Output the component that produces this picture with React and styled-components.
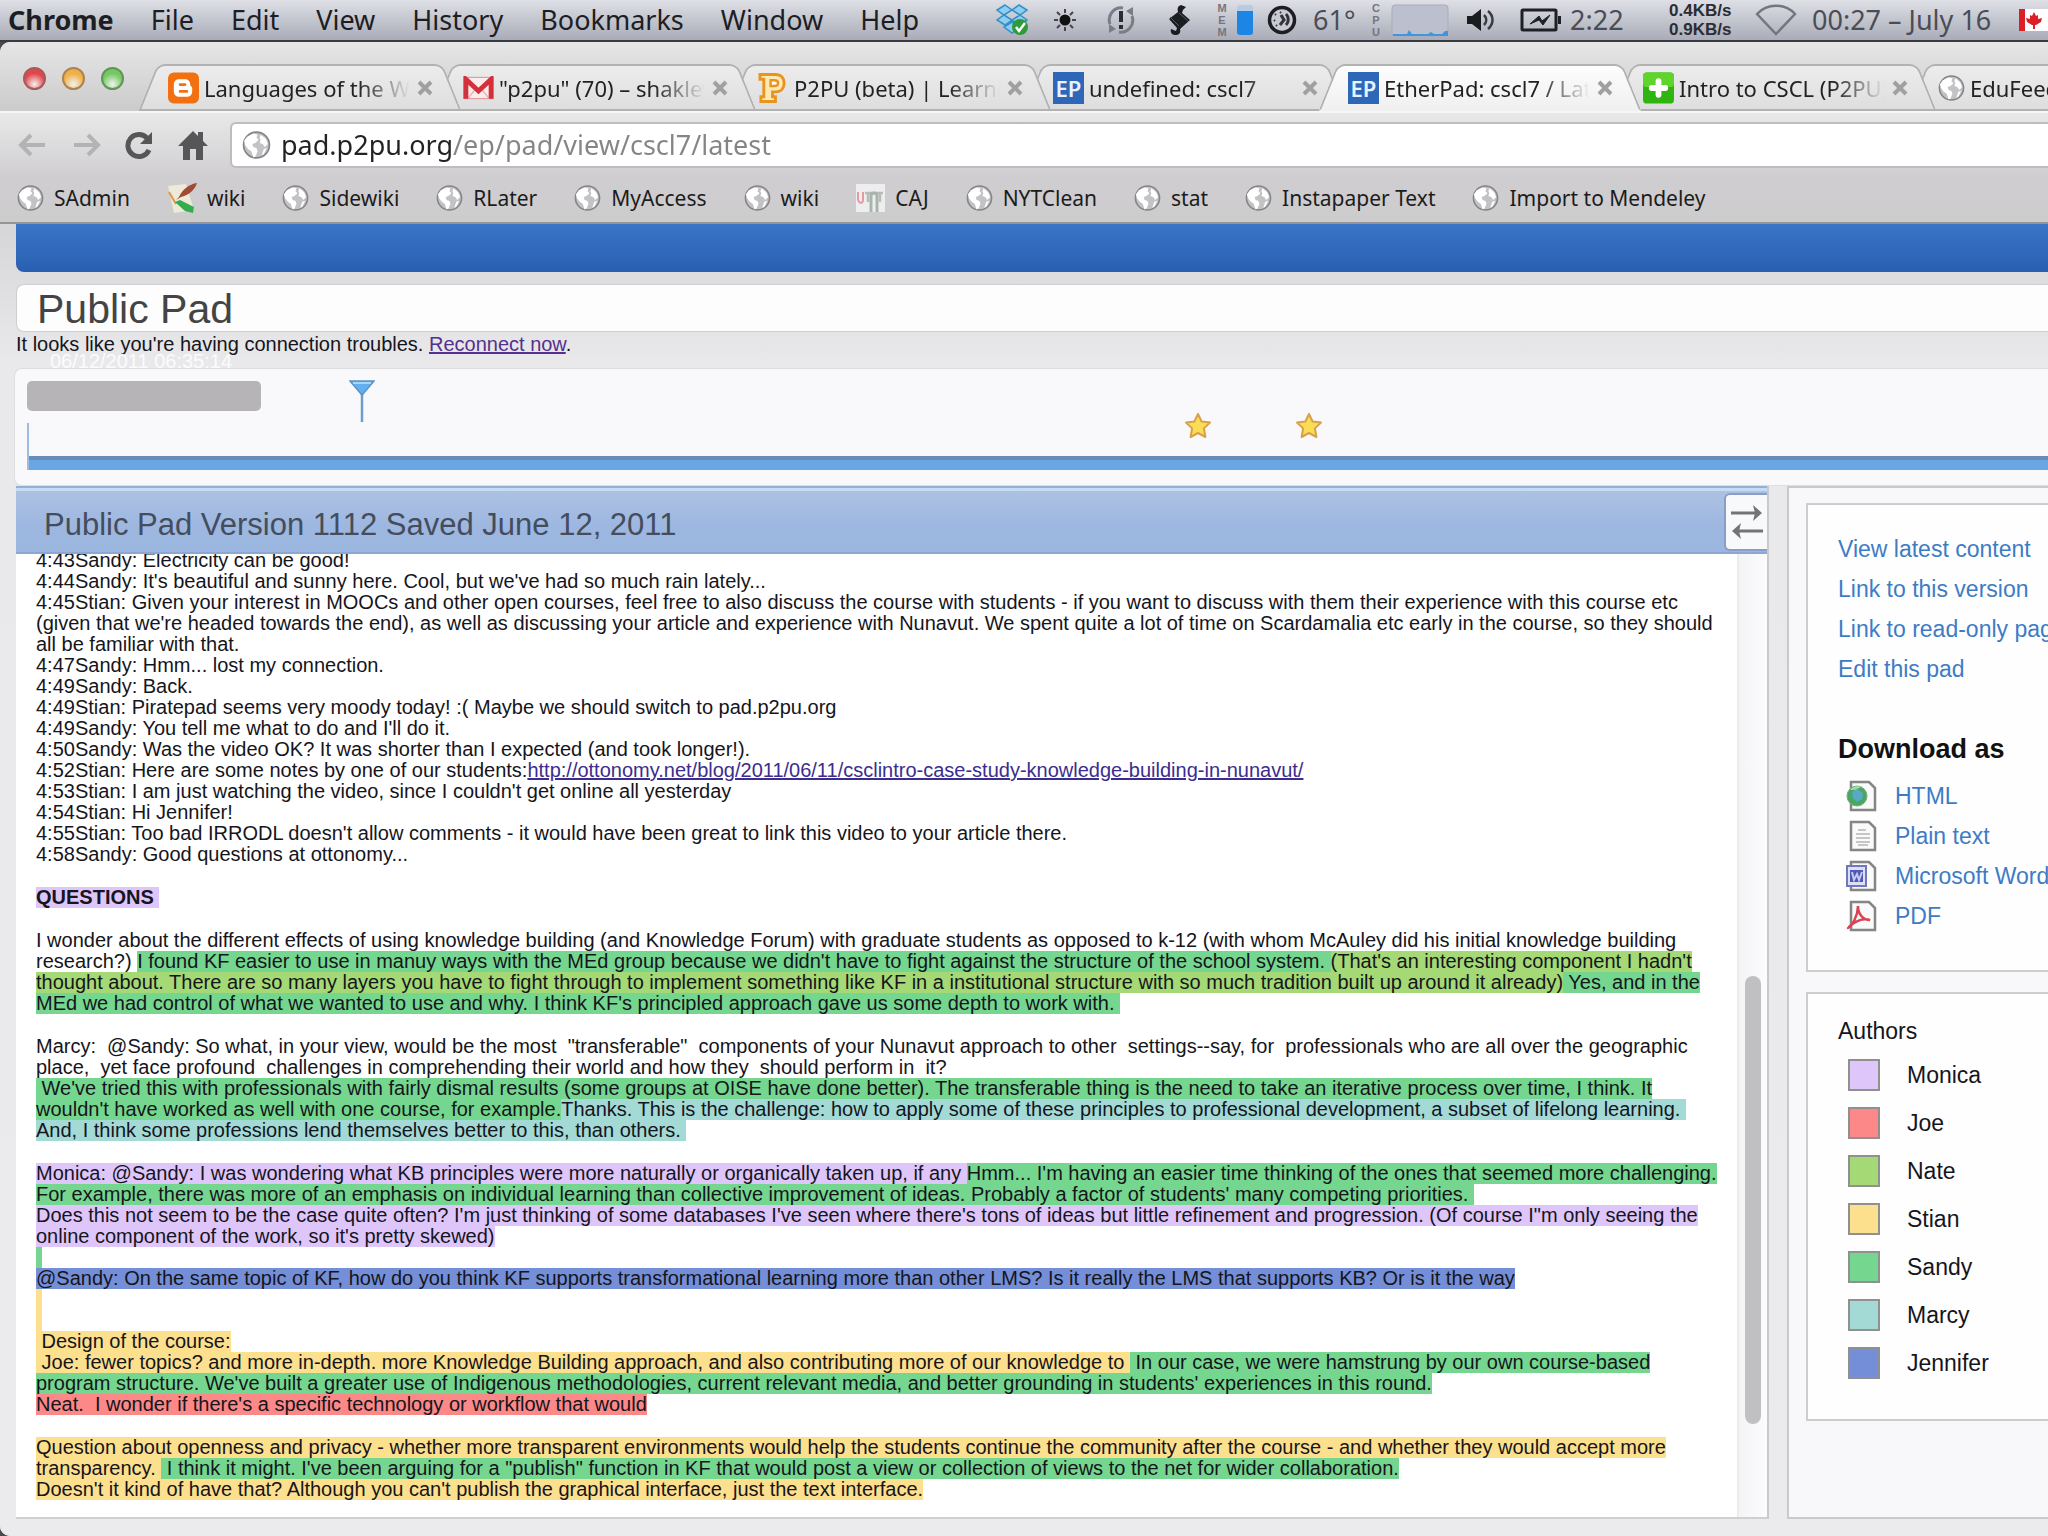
import { useState } from "react";
import styled, { createGlobalStyle, css } from "styled-components";

const UI_FONT = `"Noto Sans", "Open Sans", sans-serif`;
const PAGE_FONT = `"Liberation Sans", Arial, sans-serif`;

const AUTHOR_COLORS = {
  monica: "#dfc6fa",
  joe: "#fc8888",
  nate: "#a4d976",
  stian: "#fde08d",
  sandy: "#75d78f",
  marcy: "#a4dad6",
  jennifer: "#748fd7",
};

const GlobalStyle = createGlobalStyle`
  * {
    box-sizing: border-box;
  }

  body {
    margin: 0;
    background: #4a4a4e;
    overflow: hidden;
  }

  button {
    margin: 0;
    padding: 0;
    border: 0;
    background: none;
    font: inherit;
    color: inherit;
  }

  svg {
    display: block;
    flex: none;
  }
`;

const Desktop = styled.div`
  display: flex;
  flex-direction: column;
  height: 100vh;
  overflow: hidden;
  white-space: nowrap;
  font-family: ${UI_FONT};
`;

/* menu bar */

const MenuBar = styled.header`
  flex: none;
  display: flex;
  align-items: center;
  height: 42px;
  padding-left: 8px;
  border-bottom: 2px solid #3a3b42;
  background: linear-gradient(#dfe0e6, #c6c8d1 45%, #a9abb7);
  font-size: 27px;
  line-height: 36px;
  color: #1d1e24;
  overflow: hidden;
`;

const Menus = styled.nav`
  display: flex;
  gap: 37px;
`;

const MenuItem = styled.button`
  font-weight: ${({ $bold }) => ($bold ? 700 : 400)};
`;

const StatusItems = styled.div`
  display: flex;
  align-items: center;
  margin-left: 77px;
`;

const StatusItem = styled.div`
  flex: none;
  display: flex;
  align-items: center;
  gap: 8px;
  width: ${({ $width }) => $width}px;
  color: ${({ $dim }) => ($dim ? "#4b4d56" : "#2c2d33")};
`;

const Stacked = styled.span`
  display: flex;
  flex-direction: column;
  width: 14px;
  font-family: ${PAGE_FONT};
  font-size: 11px;
  font-weight: 700;
  line-height: 12px;
  color: #74767f;
  text-align: center;
`;

const MemoryGauge = styled.span`
  width: 16px;
  height: 30px;
  border-radius: 3px;
  background: linear-gradient(#b5cbe6 20%, #1d86e4 20%);
`;

const NetSpeed = styled.span`
  font-family: ${PAGE_FONT};
  font-size: 17px;
  font-weight: 700;
  line-height: 19px;
`;

/* browser window */

const BrowserWindow = styled.div`
  flex: 1;
  min-height: 0;
  display: flex;
  flex-direction: column;
  border-radius: 10px 0 0 10px;
  overflow: hidden;
  background: #ebeaec;
`;

const TabStrip = styled.div`
  flex: none;
  display: flex;
  align-items: flex-end;
  height: 69px;
  background: linear-gradient(#e6e6e6, #cbcbcb);
`;

const TrafficLights = styled.div`
  flex: none;
  display: flex;
  gap: 16px;
  width: 148px;
  padding-left: 23px;
  padding-bottom: 21px;
`;

const Light = styled.button`
  width: 23px;
  height: 23px;
  border: 2px solid ${({ $edge }) => $edge};
  border-radius: 50%;
  background: radial-gradient(
    circle at 50% 80%,
    #ffffffb0,
    ${({ $color }) => $color} 60%
  );
`;

const Tab = styled.div`
  position: relative;
  z-index: ${({ $order }) => $order};
  flex: none;
  display: flex;
  align-items: center;
  width: 304px;
  height: 47px;
  margin-right: -9px;
  padding: 0 8px 0 20px;
  isolation: isolate;

  &::before,
  &::after {
    content: "";
    position: absolute;
    z-index: -1;
    top: 0;
    bottom: 0;
    border: 2px solid #b2b2b2;
    border-bottom-color: ${({ $active }) => ($active ? "#f0f0f0" : "#b2b2b2")};
    background: ${({ $active }) =>
      $active
        ? "linear-gradient(#fdfdfd, #f0f0f0)"
        : "linear-gradient(#ececec, #dedede)"};
  }

  &::before {
    left: 0;
    right: 40%;
    border-right: 0;
    border-radius: 8px 0 0 0;
    transform: skewX(-22deg);
  }

  &::after {
    left: 40%;
    right: 0;
    border-left: 0;
    border-radius: 0 8px 0 0;
    transform: skewX(22deg);
  }
`;

const TabTitle = styled.button`
  flex: 1;
  min-width: 0;
  margin-left: 5px;
  overflow: hidden;
  font-size: 22px;
  line-height: 32px;
  text-align: left;
  color: #222;
  mask-image: linear-gradient(90deg, #000 75%, transparent);
`;

const CloseButton = styled.button`
  width: 22px;
  margin-left: 6px;
  margin-right: 6px;
`;

const EtherpadIcon = styled.span`
  flex: none;
  width: 31px;
  height: 32px;
  background: #2f67b8;
  color: #e8f2ff;
  font-size: 22px;
  font-weight: 600;
  line-height: 32px;
  text-align: center;
`;

const Chrome = styled.div`
  flex: none;
  border-top: 2px solid #f6f6f6;
  border-bottom: 2px solid #969497;
  background: linear-gradient(#e9e9e9, #cfcdd0 60%, #cdcccd);
`;

const Toolbar = styled.div`
  display: flex;
  align-items: center;
  padding: 9px 0 6px 18px;
`;

const ToolButton = styled.button`
  flex: none;
  width: 53px;
`;

const AddressBox = styled.label`
  flex: 1;
  display: flex;
  align-items: center;
  gap: 10px;
  height: 46px;
  padding-left: 10px;
  border: 2px solid #bdbcbe;
  border-right: 0;
  border-radius: 6px 0 0 6px;
  background: #fff;
`;

/* the host part of the address is darker than the path */
const AddressInput = styled.input`
  flex: 1;
  min-width: 0;
  padding: 0;
  border: 0;
  outline: 0;
  font: 27px/36px ${UI_FONT};
  color: transparent;
  caret-color: #222;
  background: linear-gradient(90deg, #222 172px, #858585 172px);
  background-clip: text;
`;

const BookmarkBar = styled.nav`
  display: flex;
  align-items: center;
  gap: 37px;
  height: 48px;
  padding-left: 17px;
`;

const Bookmark = styled.a`
  display: flex;
  align-items: center;
  gap: 10px;
  font-size: 21px;
  line-height: 30px;
  color: #1c1c1c;
  text-decoration: none;
`;

/* pad page */

const Page = styled.main`
  flex: 1;
  min-height: 0;
  display: flex;
  flex-direction: column;
  padding: 0 0 17px 16px;
  background: linear-gradient(#d6d5d8, #e9e9eb 140px, #ebeaec);
  font-family: ${PAGE_FONT};
  color: #15151c;
`;

const Banner = styled.div`
  flex: none;
  height: 48px;
  border-radius: 0 0 0 8px;
  background: linear-gradient(#3a75c8, #295fb1);
`;

const PadTitle = styled.h1`
  flex: none;
  margin: 12px 0 0;
  padding: 2px 0 0 20px;
  border: 1px solid #cfced0;
  border-right: 0;
  border-radius: 8px 0 0 8px;
  background: #fcfdfc;
  font-size: 41px;
  font-weight: 400;
  line-height: 44px;
  color: #444;
`;

const Notice = styled.p`
  margin: 0;
  font-size: 20px;
  line-height: 25px;

  a {
    color: #55308f;
  }
`;

const TimelineArea = styled.section`
  position: relative;
  flex: none;
  margin: 11px 0 0 -2px;
`;

const Timestamp = styled.time`
  position: absolute;
  top: -19px;
  left: 36px;
  font-size: 20px;
  line-height: 24px;
  color: #fbfbfc;
`;

const Timeline = styled.div`
  position: relative;
  height: 118px;
  padding: 12px 0 0 12px;
  border: 1px solid #dedddf;
  border-right: 0;
  border-radius: 8px 0 0 8px;
  background: #f9f9fb;
`;

const StepBox = styled.div`
  width: 234px;
  height: 30px;
  border-radius: 5px;
  background: #b6b4b7;
`;

const SliderTrack = styled.div`
  height: 47px;
  margin-top: 12px;
  border-left: 2px solid #9dbbe3;
  background: linear-gradient(
    transparent 33px,
    #6b8cb8 33px,
    #6b8cb8 37px,
    #6ba6e4 37px
  );
`;

const Pin = styled.button`
  position: absolute;
  top: ${({ $top }) => $top}px;
  left: ${({ $left }) => $left}px;
`;

const Columns = styled.div`
  flex: 1;
  min-height: 0;
  display: flex;
`;

const Editor = styled.section`
  flex: 1;
  min-width: 0;
  display: flex;
  flex-direction: column;
  border-right: 2px solid #c9c8cb;
  border-bottom: 2px solid #cfced1;
`;

const EditorHeader = styled.div`
  flex: none;
  display: flex;
  align-items: center;
  justify-content: space-between;
  height: 68px;
  padding-left: 28px;
  border-top: 2px solid #93b1d4;
  border-bottom: 2px solid #8ba7d2;
  background: linear-gradient(#c4dcf4 3px, #adc2e2 3px, #9db7e1 60%, #9ab6de);
`;

const VersionTitle = styled.h2`
  margin: 10px 0 0;
  font-size: 31px;
  font-weight: 400;
  line-height: 36px;
  color: #454d5c;
`;

const SwapButton = styled.button`
  display: flex;
  align-items: center;
  justify-content: center;
  width: 43px;
  height: 58px;
  margin-top: 4px;
  border: 2px solid #8b9cc6;
  border-right: 0;
  border-radius: 6px 0 0 6px;
  background: #f8f9fb;
`;

const EditorBody = styled.div`
  flex: 1;
  min-height: 0;
  display: flex;
  background: #fff;
`;

/* scrolled to the end, so the first line is partly cut off */
const Lines = styled.div`
  flex: 1;
  min-width: 0;
  display: flex;
  flex-direction: column;
  justify-content: flex-end;
  padding: 0 0 17px 20px;
  overflow: hidden;
`;

const Line = styled.div`
  flex: none;
  height: ${({ $blank }) => ($blank ? 22 : 21)}px;
  font-size: 20px;
  font-weight: ${({ $bold }) => ($bold ? 700 : 400)};
  line-height: 21px;
  white-space: pre;

  a {
    color: #3b2d8f;
  }
`;

const Mark = styled.span`
  display: inline-block;
  height: 100%;
  vertical-align: top;
  ${({ $author }) =>
    $author &&
    css`
      background: ${AUTHOR_COLORS[$author]};
    `}
`;

const ScrollTrack = styled.div`
  flex: none;
  display: flex;
  flex-direction: column;
  align-items: center;
  width: 30px;
  border-left: 2px solid #ececee;
  background: linear-gradient(90deg, #f4f4f6, #fcfcfd);

  &::before {
    content: "";
    flex: 423;
  }

  &::after {
    content: "";
    flex: 93;
  }
`;

const ScrollThumb = styled.div`
  flex: 449;
  width: 16px;
  border-radius: 8px;
  background: #c0bfc1;
`;

const Sidebar = styled.aside`
  flex: none;
  width: 261px;
  margin-left: 18px;
  padding: 15px 0 0 17px;
  border: 2px solid #c9c8cb;
  border-right: 0;
  background: #f8f8fa;
  font-size: 23px;
  line-height: 40px;
  overflow: hidden;
`;

const Panel = styled.section`
  margin-bottom: 20px;
  padding: ${({ $padding }) => $padding};
  border: 2px solid #cdccce;
  border-right: 0;
  background: #fefefe;
`;

const LinkList = styled.ul`
  margin: 0;
  padding: 0;
  list-style: none;
`;

const SideLink = styled.a`
  display: flex;
  align-items: center;
  gap: 18px;
  padding-left: ${({ $indent }) => ($indent ? 8 : 0)}px;
  color: #3d7cc4;
  text-decoration: none;
`;

const DownloadTitle = styled.h3`
  margin: 40px 0 7px;
  font-size: 27px;
  line-height: 40px;
  color: #111;
`;

const AuthorsTitle = styled.h3`
  margin: 0;
  font-size: 23px;
  font-weight: 400;
`;

const AuthorRow = styled.li`
  display: flex;
  align-items: center;
  gap: 27px;
  height: 48px;
  padding-left: 10px;
`;

const Swatch = styled.span`
  width: 32px;
  height: 32px;
  border: 2px solid #909090;
  background: ${({ $color }) => $color};
`;

const GlobeIcon = ({ size = 27 }) => (
  <svg width={size} height={size + 1} viewBox="0 0 28 28">
    <circle cx="14" cy="14" r="12.5" fill="#c3c3c5" stroke="#858587" strokeWidth="1.6" />
    <path
      d="M5 6l6-3 4 1-1 3 2 2-3 3-3 1 1 3 3 1 1 3-2 5-2 1-2-6-3-2-3-4-1-4z"
      fill="#fff"
    />
    <path d="M18 4l5 4 2 5-3 3-2-3-3-1 1-3-1-2zM21 18l3-1-3 6-2 1z" fill="#fff" />
  </svg>
);

const BloggerIcon = () => (
  <svg width="31" height="32" viewBox="0 0 32 32">
    <rect width="32" height="32" rx="6" fill="#f2700f" />
    <path
      d="M12 7h5c4 0 6 2 6 6 0 2 2 1 2 3v3c0 4-2 6-6 6h-7c-4 0-6-2-6-6v-6c0-4 2-6 6-6z"
      fill="#fff"
    />
    <path d="M12.500 12.500h5M12.500 19.500h7" stroke="#f2700f" strokeWidth="3" strokeLinecap="round" />
  </svg>
);

const GmailIcon = () => (
  <svg width="31" height="24" viewBox="0 0 32 24">
    <rect x="1" y="1" width="30" height="22" fill="#fbecec" stroke="#dc8d90" />
    <path d="M5 23l8-10M27 23l-8-10" stroke="#e6b3b5" strokeWidth="1.500" />
    <path d="M3 23V3l13 12L29 3v20" fill="none" stroke="#d4303c" strokeWidth="5" />
  </svg>
);

const P2puIcon = () => (
  <svg width="31" height="32" viewBox="0 0 32 32">
    <path
      d="M2 2h16c6 0 9 4 9 9s-3 9-9 9h-3v5h3v5H3v-5h3V7H2z"
      fill="#fde9b4"
      stroke="#ea9420"
      strokeWidth="3"
    />
    <path d="M13 8h4c5 0 5 6 0 6h-4z" fill="#fff" stroke="#ea9420" strokeWidth="2.500" />
  </svg>
);

const PlusIcon = () => (
  <svg width="31" height="32" viewBox="0 0 32 32">
    <rect width="32" height="32" rx="4" fill="#2fb410" />
    <rect width="32" height="15" rx="4" fill="#5fd42a" />
    <path d="M16 9v14M9 16h14" stroke="#fff" strokeWidth="6" strokeLinecap="round" />
  </svg>
);

const CloseIcon = () => (
  <svg width="18" height="18" viewBox="0 0 18 18">
    <path d="M3 3l12 12M15 3L3 15" stroke="#a0a0a0" strokeWidth="4" />
  </svg>
);

const WikiIcon = () => (
  <svg width="30" height="32" viewBox="0 0 30 32">
    <path d="M1 4l18-2 8 26-20 3z" fill="#eee9d8" />
    <path d="M2 10l7 12" stroke="#e0964c" strokeWidth="2" />
    <path d="M8 20l5-2 14 7-1 6-8-2z" fill="#34ad4d" />
    <path d="M12 15C15 8 22 2 30 1c-2 6-7 12-16 14l-5 3z" fill="#a14a34" />
  </svg>
);

const CajIcon = () => (
  <svg width="29" height="28" viewBox="0 0 29 28">
    <rect width="29" height="28" fill="#efeeee" />
    <path d="M2 8v6c0 6 5 6 5 2V8" fill="none" stroke="#df9da2" strokeWidth="2" />
    <path d="M9 9h18M12 9v9M24 9v9" stroke="#b7bcb8" strokeWidth="2.500" />
    <path d="M15 28V12c0-4 6-4 6 0v16" fill="none" stroke="#a7b5ae" strokeWidth="3" />
  </svg>
);

const StarIcon = () => (
  <svg width="28" height="28" viewBox="0 0 28 28">
    <path
      d="M14 2l3.600 7.500 8.400 1.100-6.100 5.800 1.500 8.600-7.400-4-7.400 4 1.500-8.600L2 10.600l8.400-1.100z"
      fill="#fbdc55"
      stroke="#d9a04a"
      strokeWidth="2"
      strokeLinejoin="round"
    />
  </svg>
);

const MarkerIcon = () => (
  <svg width="26" height="42" viewBox="0 0 26 42">
    <path d="M13 14v28" stroke="#6f9ccb" strokeWidth="2.500" />
    <path d="M1 1h24L13 15z" fill="#63b0ee" stroke="#5c93c6" strokeWidth="1.500" />
    <path d="M4 3h18" stroke="#a5d6fa" strokeWidth="2" />
  </svg>
);

const PageOutline = ({ children }) => (
  <svg width="31" height="32" viewBox="0 0 31 32">
    <path d="M5 2h18l6 6v22H5z" fill="#fafafa" stroke="#858585" strokeWidth="2.500" />
    {children}
  </svg>
);

const HtmlFileIcon = () => (
  <PageOutline>
    <circle cx="11" cy="16" r="10" fill="#4aa763" stroke="#77a989" />
    <path d="M6 12l5-3 6 4-1 6-5 3-4-4z" fill="#57a9c4" />
    <path d="M4 10c3-4 8-5 11-3l-6 3z" fill="#9bdc9c" />
  </PageOutline>
);

const TextFileIcon = () => (
  <PageOutline>
    <path d="M12 10h8M10 14h14M10 18h14M10 22h14M12 25h10" stroke="#b5b5b5" strokeWidth="1.500" />
  </PageOutline>
);

const WordFileIcon = () => (
  <PageOutline>
    <rect x="1" y="6" width="19" height="20" fill="#dcdff5" stroke="#6f77bd" strokeWidth="2" />
    <rect x="4" y="10" width="13" height="12" fill="#5059b5" />
    <path d="M6 12l2 8 3-6 2 6 3-8" fill="none" stroke="#c6cbf0" strokeWidth="2" />
  </PageOutline>
);

const PdfFileIcon = () => (
  <PageOutline>
    <path
      d="M2 28c4-2 10-12 10-22 0 8 5 14 12 14-6-2-14 0-21 7"
      fill="none"
      stroke="#dc4254"
      strokeWidth="2.500"
      strokeLinecap="round"
    />
  </PageOutline>
);

const DropboxIcon = () => (
  <svg width="33" height="32" viewBox="0 0 33 32">
    <path
      d="M9 1l7 5-8 5-7-5zM23 1l8 5-7 5-8-5zM8 11l8 5-7 5-8-5zM24 11l7 5-8 5-7-5zM16 18l8 5-8 6-8-6z"
      fill="#8ccff2"
      stroke="#358fc4"
      strokeWidth="1.500"
    />
    <circle cx="24" cy="23" r="8" fill="#2e9a3b" />
    <path d="M20 23l3 4 6-8" fill="none" stroke="#fff" strokeWidth="2.500" />
  </svg>
);

const SunIcon = () => (
  <svg width="26" height="26" viewBox="0 0 26 26">
    <circle cx="13" cy="13" r="5.500" fill="#111" />
    <path
      d="M13 2v4M13 20v4M2 13h4M20 13h4M5 5l3 3M18 18l3 3M21 5l-3 3M5 21l3-3"
      stroke="#44454c"
      strokeWidth="2"
    />
  </svg>
);

const SyncIcon = () => (
  <svg width="30" height="30" viewBox="0 0 30 30">
    <path
      d="M17 3A12 12 0 0 0 4 19M13 27A12 12 0 0 0 26 11"
      fill="none"
      stroke="#7b7d86"
      strokeWidth="3"
    />
    <path d="M20 6l7-4v9zM10 24l-7 4v-9z" fill="#7b7d86" />
    <path d="M15 6v11M15 20v4" stroke="#2c2d33" strokeWidth="4" />
  </svg>
);

const ScriptIcon = () => (
  <svg width="24" height="32" viewBox="0 0 24 32">
    <path
      d="M14 1l5 2-3 3-1 3 8 7-10 9c1 4-1 6-5 6-3 0-5-3-4-6l5 2 1-3-8-9 9-7c-1-4 0-6 3-7z"
      fill="#1c1d22"
    />
    <path d="M3 13l9 9M12 9l9 8" stroke="#5b5d66" strokeWidth="1" />
  </svg>
);

const GaugeIcon = () => (
  <svg width="30" height="30" viewBox="0 0 30 30">
    <circle cx="15" cy="15" r="12.500" fill="#c9cad2" stroke="#1d1e23" strokeWidth="3.500" />
    <path d="M14 10l3 5-4 5M19 9c3 3 3 8 0 11" fill="none" stroke="#33343a" strokeWidth="3" />
    <path d="M8 9l1 1M13 7l1 1M7 15l1 1M9 20l1 1" stroke="#33343a" strokeWidth="2" />
  </svg>
);

const CpuGraph = () => (
  <svg width="58" height="33" viewBox="0 0 58 33">
    <rect x="1" y="1" width="56" height="31" rx="3" fill="#bcc0ce" stroke="#a9acba" />
    <path d="M2 32v-2h14l2-4 3 4h16l3-2 3 2h8l3-3h3v5z" fill="#3f96de" />
  </svg>
);

const SpeakerIcon = () => (
  <svg width="29" height="24" viewBox="0 0 29 24">
    <path d="M1 8h5l9-7v22l-9-7H1z" fill="#1b1c20" />
    <path d="M18 7c3 3 3 7 0 10M22 3c6 5 6 13 0 18" fill="none" stroke="#3a3b42" strokeWidth="2.500" />
  </svg>
);

const BatteryIcon = () => (
  <svg width="42" height="24" viewBox="0 0 42 24">
    <rect x="2" y="2" width="34" height="20" rx="1" fill="none" stroke="#1f2025" strokeWidth="3" />
    <path d="M38 8h3v8h-3z" fill="#1f2025" />
    <path d="M10 16l9-8 3 5 8-6-7 10-4-5z" fill="#1f2025" stroke="#1f2025" />
  </svg>
);

const WifiIcon = () => (
  <svg width="42" height="32" viewBox="0 0 42 32">
    <path d="M2 10C12-1 30-1 40 10L21 30z" fill="none" stroke="#74767f" strokeWidth="2.500" />
  </svg>
);

const FlagIcon = () => (
  <svg width="40" height="22" viewBox="0 0 40 22">
    <rect width="40" height="22" fill="#fff" />
    <path d="M0 0h6v22H0zM31 0h9v22h-9z" fill="#dc1f26" />
    <path
      d="M15 3l2 4 2-1v4l4-1-1 4-5 3h-1v4h-2v-4h-1l-5-3-1-4 4 1V6l2 1z"
      fill="#dc1f26"
    />
  </svg>
);

const ArrowIcon = ({ flip }) => (
  <svg width="30" height="26" viewBox="0 0 30 26">
    <path
      d={flip ? "M3 13h23M17 3l10 10-10 10" : "M27 13H4M13 3L3 13l10 10"}
      fill="none"
      stroke="#b3b2b4"
      strokeWidth="4"
    />
  </svg>
);

const ReloadIcon = () => (
  <svg width="30" height="30" viewBox="0 0 30 30">
    <path d="M25 20A11 11 0 1 1 23 8" fill="none" stroke="#565658" strokeWidth="5" />
    <path d="M28 2v12H16z" fill="#565658" />
  </svg>
);

const HomeIcon = () => (
  <svg width="32" height="30" viewBox="0 0 30 30">
    <path d="M15 1l5 5V2h5v9l5 5h-5v14h-7V19h-6v11H5V16H0z" fill="#565658" />
  </svg>
);

const SwapIcon = () => (
  <svg width="32" height="34" viewBox="0 0 32 34">
    <path d="M0 8h26M5 26h27" stroke="#747477" strokeWidth="3" />
    <path d="M22 0l9 8-9 8 2-8zM10 18l-9 8 9 8-2-8z" fill="#747477" />
  </svg>
);

const menus = ["Chrome", "File", "Edit", "View", "History", "Bookmarks", "Window", "Help"];

const lights = [
  { label: "Close", color: "#e0474c", edge: "#a9595a" },
  { label: "Minimize", color: "#eeb048", edge: "#ac8350" },
  { label: "Zoom", color: "#74c761", edge: "#5f9657" },
];

const EtherpadFavicon = () => <EtherpadIcon>EP</EtherpadIcon>;

const tabs = [
  { title: "Languages of the World", Icon: BloggerIcon },
  { title: '"p2pu" (70) – shaklev', Icon: GmailIcon },
  { title: "P2PU (beta) | Learning", Icon: P2puIcon },
  { title: "undefined: cscl7", Icon: EtherpadFavicon },
  { title: "EtherPad: cscl7 / Latest", Icon: EtherpadFavicon },
  { title: "Intro to CSCL (P2PU)", Icon: PlusIcon },
  { title: "EduFeedr", Icon: GlobeIcon },
];

const bookmarks = [
  { title: "SAdmin" },
  { title: "wiki", Icon: WikiIcon },
  { title: "Sidewiki" },
  { title: "RLater" },
  { title: "MyAccess" },
  { title: "wiki" },
  { title: "CAJ", Icon: CajIcon },
  { title: "NYTClean" },
  { title: "stat" },
  { title: "Instapaper Text" },
  { title: "Import to Mendeley" },
];

const NOTES_URL =
  "http://ottonomy.net/blog/2011/06/11/csclintro-case-study-knowledge-building-in-nunavut/";

// each line is a list of [text, author] runs, an empty list is a blank line
const lines = [
  [["4:43Sandy: Electricity can be good!"]],
  [["4:44Sandy: It's beautiful and sunny here. Cool, but we've had so much rain lately..."]],
  [["4:45Stian: Given your interest in MOOCs and other open courses, feel free to also discuss the course with students - if you want to discuss with them their experience with this course etc"]],
  [["(given that we're headed towards the end), as well as discussing your article and experience with Nunavut. We spent quite a lot of time on Scardamalia etc early in the course, so they should"]],
  [["all be familiar with that."]],
  [["4:47Sandy: Hmm... lost my connection."]],
  [["4:49Sandy: Back."]],
  [["4:49Stian: Piratepad seems very moody today! :( Maybe we should switch to pad.p2pu.org"]],
  [["4:49Sandy: You tell me what to do and I'll do it."]],
  [["4:50Sandy: Was the video OK? It was shorter than I expected (and took longer!)."]],
  [["4:52Stian: Here are some notes by one of our students:"], [NOTES_URL, "link"]],
  [["4:53Stian: I am just watching the video, since I couldn't get online all yesterday"]],
  [["4:54Stian: Hi Jennifer!"]],
  [["4:55Stian: Too bad IRRODL doesn't allow comments - it would have been great to link this video to your article there."]],
  [["4:58Sandy: Good questions at ottonomy..."]],
  [],
  [["QUESTIONS ", "monica", true]],
  [],
  [["I wonder about the different effects of using knowledge building (and Knowledge Forum) with graduate students as opposed to k-12 (with whom McAuley did his initial knowledge building"]],
  [
    ["research?) "],
    ["I found KF easier to use in manuy ways with the MEd group because we didn't have to fight against the structure of the school system. ", "sandy"],
    ["(That's an interesting component I hadn't", "nate"],
  ],
  [
    ["thought about. There are so many layers you have to fight through to implement something like KF in a institutional structure with so much tradition built up around it already)", "nate"],
    [" Yes, and in the", "sandy"],
  ],
  [["MEd we had control of what we wanted to use and why. I think KF's principled approach gave us some depth to work with. ", "sandy"]],
  [],
  [["Marcy:  @Sandy: So what, in your view, would be the most  \"transferable\"  components of your Nunavut approach to other  settings--say, for  professionals who are all over the geographic"]],
  [["place,  yet face profound  challenges in comprehending their world and how they  should perform in  it?"]],
  [[" We've tried this with professionals with fairly dismal results (some groups at OISE have done better). The transferable thing is the need to take an iterative process over time, I think. It", "sandy"]],
  [
    ["wouldn't have worked as well with one course, for example.", "sandy"],
    ["Thanks. This is the challenge: how to apply some of these principles to professional development, a subset of lifelong learning. ", "marcy"],
  ],
  [["And, I think some professions lend themselves better to this, than others. ", "marcy"]],
  [],
  [
    ["Monica: @Sandy: I was wondering what KB principles were more naturally or organically taken up, if any ", "monica"],
    ["Hmm... I'm having an easier time thinking of the ones that seemed more challenging.", "sandy"],
  ],
  [["For example, there was more of an emphasis on individual learning than collective improvement of ideas. Probably a factor of students' many competing priorities. ", "sandy"]],
  [["Does this not seem to be the case quite often? I'm just thinking of some databases I've seen where there's tons of ideas but little refinement and progression. (Of course I\"m only seeing the", "monica"]],
  [["online component of the work, so it's pretty skewed)", "monica"]],
  [[" ", "sandy"]],
  [["@Sandy: On the same topic of KF, how do you think KF supports transformational learning more than other LMS? Is it really the LMS that supports KB? Or is it the way", "jennifer"]],
  [[" ", "stian"]],
  [[" ", "stian"]],
  [[" Design of the course:", "stian"]],
  [
    [" Joe: fewer topics? and more in-depth. more Knowledge Building approach, and also contributing more of our knowledge to ", "stian"],
    [" In our case, we were hamstrung by our own course-based", "sandy"],
  ],
  [["program structure. We've built a greater use of Indigenous methodologies, current relevant media, and better grounding in students' experiences in this round.", "sandy"]],
  [["Neat.  I wonder if there's a specific technology or workflow that would", "joe"]],
  [],
  [["Question about openness and privacy - whether more transparent environments would help the students continue the community after the course - and whether they would accept more", "stian"]],
  [
    ["transparency. ", "stian"],
    [" I think it might. I've been arguing for a \"publish\" function in KF that would post a view or collection of views to the net for wider collaboration.", "sandy"],
  ],
  [["Doesn't it kind of have that? Although you can't publish the graphical interface, just the text interface.", "stian"]],
];

const padLinks = [
  "View latest content",
  "Link to this version",
  "Link to read-only page",
  "Edit this pad",
];

const downloads = [
  { title: "HTML", Icon: HtmlFileIcon },
  { title: "Plain text", Icon: TextFileIcon },
  { title: "Microsoft Word", Icon: WordFileIcon },
  { title: "PDF", Icon: PdfFileIcon },
];

const authors = ["Monica", "Joe", "Nate", "Stian", "Sandy", "Marcy", "Jennifer"];

const SystemStatus = () => (
  <StatusItems>
    <StatusItem $width={56}><DropboxIcon /></StatusItem>
    <StatusItem $width={54}><SunIcon /></StatusItem>
    <StatusItem $width={61}><SyncIcon /></StatusItem>
    <StatusItem $width={48}><ScriptIcon /></StatusItem>
    <StatusItem $width={52}>
      <Stacked><span>M</span><span>E</span><span>M</span></Stacked>
      <MemoryGauge />
    </StatusItem>
    <StatusItem $width={46}><GaugeIcon /></StatusItem>
    <StatusItem $width={56} $dim>61°</StatusItem>
    <StatusItem $width={97}>
      <Stacked><span>C</span><span>P</span><span>U</span></Stacked>
      <CpuGraph />
    </StatusItem>
    <StatusItem $width={54}><SpeakerIcon /></StatusItem>
    <StatusItem $width={149} $dim><BatteryIcon />2:22</StatusItem>
    <StatusItem $width={86}>
      <NetSpeed>0.4KB/s<br />0.9KB/s</NetSpeed>
    </StatusItem>
    <StatusItem $width={57}><WifiIcon /></StatusItem>
    <StatusItem $width={207} $dim>00:27 – July 16</StatusItem>
    <StatusItem $width={40}><FlagIcon /></StatusItem>
  </StatusItems>
);

const PadLine = ({ runs }) => (
  <Line $blank={runs.length === 0} $bold={runs.length > 0 && runs[0][2]}>
    {runs.map(([text, author], index) =>
      author === "link" ? (
        <a key={index} href={text}>{text}</a>
      ) : (
        <Mark key={index} $author={author}>{text}</Mark>
      )
    )}
  </Line>
);

const App = () => {
  const [activeTab, setActiveTab] = useState(4);
  const [address, setAddress] = useState("pad.p2pu.org/ep/pad/view/cscl7/latest");

  return (
    <Desktop>
      <GlobalStyle />
      <MenuBar>
        <Menus>
          {menus.map((menu, index) => (
            <MenuItem key={menu} $bold={index === 0}>{menu}</MenuItem>
          ))}
        </Menus>
        <SystemStatus />
      </MenuBar>

      <BrowserWindow>
        <TabStrip>
          <TrafficLights>
            {lights.map(({ label, color, edge }) => (
              <Light key={label} aria-label={label} $color={color} $edge={edge} />
            ))}
          </TrafficLights>
          {tabs.map(({ title, Icon }, index) => (
            <Tab
              key={title}
              $active={index === activeTab}
              $order={index === activeTab ? 20 : 10 - index}
            >
              <Icon />
              <TabTitle onClick={() => setActiveTab(index)}>{title}</TabTitle>
              <CloseButton aria-label={`Close ${title}`}><CloseIcon /></CloseButton>
            </Tab>
          ))}
        </TabStrip>

        <Chrome>
          <Toolbar>
            <ToolButton aria-label="Back"><ArrowIcon /></ToolButton>
            <ToolButton aria-label="Forward"><ArrowIcon flip /></ToolButton>
            <ToolButton aria-label="Reload"><ReloadIcon /></ToolButton>
            <ToolButton aria-label="Home"><HomeIcon /></ToolButton>
            <AddressBox>
              <GlobeIcon size={29} />
              <AddressInput
                aria-label="Address"
                value={address}
                onChange={(e) => setAddress(e.target.value)}
              />
            </AddressBox>
          </Toolbar>
          <BookmarkBar>
            {bookmarks.map(({ title, Icon = GlobeIcon }, index) => (
              <Bookmark key={index} href="#">
                <Icon />
                {title}
              </Bookmark>
            ))}
          </BookmarkBar>
        </Chrome>

        <Page>
          <Banner />
          <PadTitle>Public Pad</PadTitle>
          <Notice>
            It looks like you're having connection troubles. <a href="#">Reconnect now</a>.
          </Notice>

          <TimelineArea>
            <Timestamp>06/12/2011 06:35:14</Timestamp>
            <Timeline>
              <StepBox />
              <SliderTrack />
              <Pin aria-label="Current revision" $top={11} $left={334}><MarkerIcon /></Pin>
              <Pin aria-label="Saved revision" $top={43} $left={1169}><StarIcon /></Pin>
              <Pin aria-label="Saved revision" $top={43} $left={1280}><StarIcon /></Pin>
            </Timeline>
          </TimelineArea>

          <Columns>
            <Editor>
              <EditorHeader>
                <VersionTitle>Public Pad Version 1112 Saved June 12, 2011</VersionTitle>
                <SwapButton aria-label="Toggle width"><SwapIcon /></SwapButton>
              </EditorHeader>
              <EditorBody>
                <Lines>
                  {lines.map((runs, index) => (
                    <PadLine key={index} runs={runs} />
                  ))}
                </Lines>
                <ScrollTrack>
                  <ScrollThumb />
                </ScrollTrack>
              </EditorBody>
            </Editor>

            <Sidebar>
              <Panel $padding="24px 0 34px 30px">
                <LinkList>
                  {padLinks.map((title) => (
                    <li key={title}><SideLink href="#">{title}</SideLink></li>
                  ))}
                </LinkList>
                <DownloadTitle>Download as</DownloadTitle>
                <LinkList>
                  {downloads.map(({ title, Icon }) => (
                    <li key={title}>
                      <SideLink href="#" $indent>
                        <Icon />
                        {title}
                      </SideLink>
                    </li>
                  ))}
                </LinkList>
              </Panel>
              <Panel $padding="17px 0 32px 30px">
                <AuthorsTitle>Authors</AuthorsTitle>
                <LinkList>
                  {authors.map((name) => (
                    <AuthorRow key={name}>
                      <Swatch $color={AUTHOR_COLORS[name.toLowerCase()]} />
                      {name}
                    </AuthorRow>
                  ))}
                </LinkList>
              </Panel>
            </Sidebar>
          </Columns>
        </Page>
      </BrowserWindow>
    </Desktop>
  );
};

export default App;
